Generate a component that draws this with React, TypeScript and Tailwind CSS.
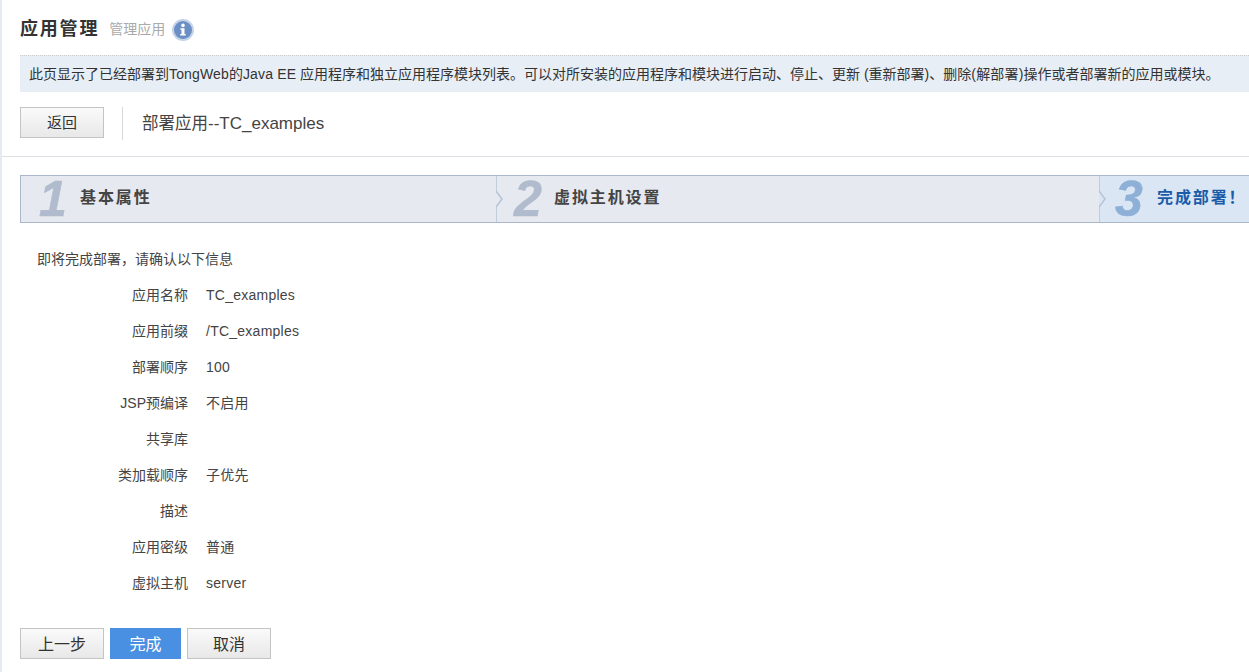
import React from 'react';

const FONT = "font-['Liberation_Sans','Noto_Sans_CJK_SC',sans-serif]";

const rows = [
  ['应用名称', 'TC_examples'],
  ['应用前缀', '/TC_examples'],
  ['部署顺序', '100'],
  ['JSP预编译', '不启用'],
  ['共享库', ''],
  ['类加载顺序', '子优先'],
  ['描述', ''],
  ['应用密级', '普通'],
  ['虚拟主机', 'server'],
];

const InfoIcon = () => (
  <svg width="22" height="22" viewBox="0 0 22 22" className="ml-[7px] shrink-0">
    <circle cx="11" cy="11" r="11" fill="#c5d3e8" />
    <circle cx="11" cy="11" r="9" fill="#6b8fc4" />
    <circle cx="11" cy="6.4" r="1.8" fill="#fff" />
    <path d="M8.4 9.2h4.1v5.9h1.2v1.5H8.3v-1.5h1.2v-4.4h-1.1z" fill="#fff" />
  </svg>
);

const Chevron = () => (
  <svg width="8" height="46" viewBox="0 0 8 46" className="absolute left-0 top-0">
    <path d="M0 0V15L6 23L0 31V46" fill="none" stroke="#b4c3d6" strokeWidth="1.5" />
  </svg>
);

const Step = ({ n, label, active, className, numClass }: { n: string; label: string; active?: boolean; className: string; numClass: string }) => (
  <div className={`relative flex items-center h-full ${active ? 'bg-[#dbe6f5]' : 'bg-[#e6e9ef]'} ${className}`}>
    {n !== '1' && <Chevron />}
    <span className={`text-[50px] leading-none font-bold italic ${numClass} ${active ? 'text-[#8fb0d6] [-webkit-text-stroke:0.6px_#8fb0d6]' : 'text-[#b0bccd] [-webkit-text-stroke:0.6px_#b0bccd]'}`}>{n}</span>
    <span className={`mb-[2px] text-[16px] font-bold tracking-[1.9px] ${active ? 'text-[#1a5ca8]' : 'text-[#444]'}`}>{label}</span>
  </div>
);

const GrayButton = ({ children, className }: { children: React.ReactNode; className: string }) => (
  <button className={`w-[84px] h-[31px] pt-[2px] border border-[#c4c4c4] bg-gradient-to-b from-[#fafafa] to-[#e8e8e8] text-[#333] ${className}`}>{children}</button>
);

export default function App() {
  return (
    <div className={`${FONT} w-[1249px] h-[672px] overflow-hidden bg-white border-l-2 border-l-[#e6eaf4] text-[#444]`}>
      <div className="flex items-center h-[55px] pl-[18px] pt-[4px]">
        <span className="text-[18px] font-bold text-[#333] tracking-[1.8px] font-['Liberation_Serif','Noto_Sans_CJK_SC',serif]">应用管理</span>
        <span className="ml-[10px] text-[14px] text-[#aaa]">管理应用</span>
        <InfoIcon />
      </div>
      <div className="ml-[18px] h-[37px] flex items-center pl-[9px] bg-[#e8eef6] border-t border-dotted border-t-[#ccc] text-[14px] text-[#333] whitespace-nowrap">
        <span>此页显示了已经部署到<span className="tracking-[0.15px]">TongWeb</span>的<span className="tracking-[0.15px]">Java EE</span> 应用程序和独立应用程序模块列表。可以对所安装的应用程序和模块进行启动、停止、更新 (重新部署)、删除<span className="tracking-[0.2px]">(解部署)</span>操作或者部署新的应用或模块。</span>
      </div>
      <div className="flex items-start pl-[18px] pt-[15px] h-[65px] border-b border-b-[#dcdfe4]">
        <GrayButton className="text-[15px]">返回</GrayButton>
        <div className="ml-[18px] w-px h-[33px] bg-[#d8d8d8]" />
        <span className="ml-[19px] mt-[4px] text-[17px] leading-[24px] text-[#444]"><span className="text-[16.5px]">部署应用</span>--TC_examples</span>
      </div>
      <div className="flex ml-[18px] mt-[18px] h-[48px] border-y border-y-[#aab6cc] border-l border-l-[#aab6cc]">
        <Step n="1" label="基本属性" className="w-[475px]" numClass="w-[59px] pl-[18px]" />
        <Step n="2" label="虚拟主机设置" className="w-[603px]" numClass="w-[58px] pl-[18px]" />
        <Step n="3" label="完成部署！" active className="flex-1" numClass="w-[58px] pl-[16px]" />
      </div>
      <div className="ml-[35px] mt-[26px] text-[14px] leading-[20px]">即将完成部署，请确认以下信息</div>
      <div className="mt-[8px] flex flex-col text-[14px] leading-[36px]">
        {rows.map(([k, v]) => (
          <div key={k} className="flex h-[36px]">
            <span className="w-[186px] text-right">{k}</span>
            <span className="ml-[18px] tracking-[0.25px]">{v}</span>
          </div>
        ))}
      </div>
      <div className="flex gap-[6px] ml-[18px] mt-[27px] text-[16px]">
        <GrayButton className="">上一步</GrayButton>
        <button className="w-[71px] h-[31px] pt-[2px] bg-[#4a90e2] text-white">完成</button>
        <GrayButton className="">取消</GrayButton>
      </div>
    </div>
  );
}
